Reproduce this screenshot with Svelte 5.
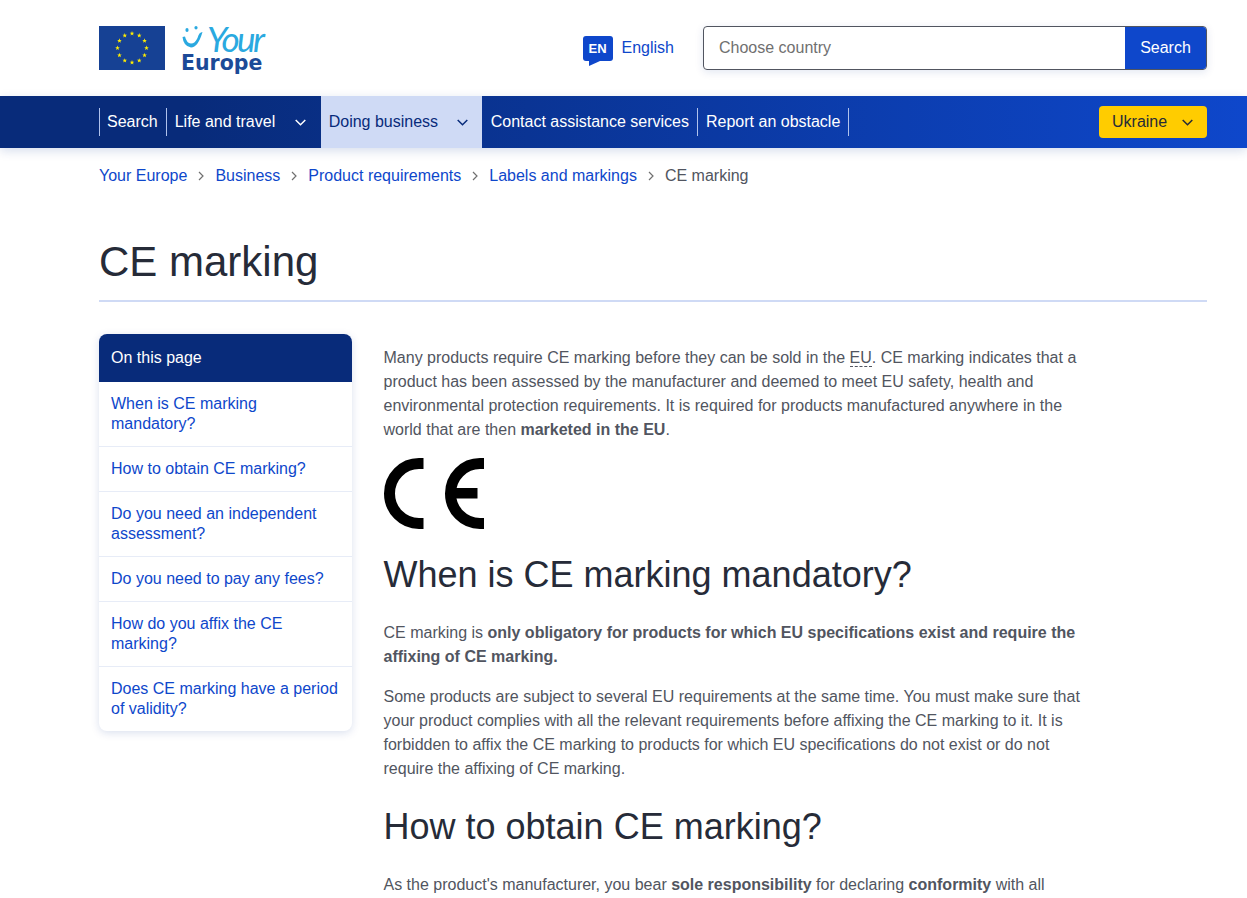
<script>
	const stars = Array.from({ length: 12 }, (_, i) => {
		const a = (i * Math.PI) / 6;
		return { x: 33 + 14.5 * Math.sin(a), y: 22 - 14.5 * Math.cos(a) };
	});

	const breadcrumbs = ['Your Europe', 'Business', 'Product requirements', 'Labels and markings'];

	const toc = [
		'When is CE marking mandatory?',
		'How to obtain CE marking?',
		'Do you need an independent assessment?',
		'Do you need to pay any fees?',
		'How do you affix the CE marking?',
		'Does CE marking have a period of validity?'
	];
</script>

<header class="site-header">
	<div class="container header-row">
		<a class="logo" href="#top">
			<svg class="flag" width="66" height="44" viewBox="0 0 66 44">
				<rect width="66" height="44" fill="#164194" />
				{#each stars as s}
					<polygon
						fill="#ffed00"
						transform="translate({s.x} {s.y})"
						points="0,-2.4 .6,-.8 2.3,-.8 1,.3 1.4,2 0,1 -1.4,2 -1,.3 -2.3,-.8 -.6,-.8"
					/>
				{/each}
			</svg>
			<span class="logo-mark">
				<svg class="smile" width="26" height="26" viewBox="0 0 26 26">
					<ellipse cx="6" cy="4" rx="1.600" ry="2" fill="#2aa9e0" />
					<ellipse cx="15" cy="1.800" rx="1.600" ry="1.800" fill="#2aa9e0" />
					<path d="M1.500 11 Q2.500 20.500 10 21.500 Q17 21.500 21.500 6 Q18 6 16.500 12 Q14 17.500 10 17.500 Q5.500 17 4 10.500 Z" fill="#2aa9e0" />
				</svg>
				<span class="logo-your">Your</span>
				<span class="logo-europe">Europe</span>
			</span>
		</a>
		<div class="header-right">
			<a class="lang" href="#top">
				<span class="lang-icon">EN</span>
				<span>English</span>
			</a>
			<div class="search">
				<span class="search-input">Choose country</span>
				<button class="search-btn">Search</button>
			</div>
		</div>
	</div>
</header>

<nav class="main-nav">
	<div class="container nav-row">
		<ul class="nav-list">
			<li class="nav-item sep"><a href="#top">Search</a></li>
			<li class="nav-item sep drop">
				<a href="#top">Life and travel</a>
				<svg class="chev" width="11" height="7" viewBox="0 0 11 7"><path d="M.7 1 L5.500 5.800 L10.300 1" /></svg>
			</li>
			<li class="nav-item active">
				<a href="#top">Doing business</a>
				<svg class="chev" width="11" height="7" viewBox="0 0 11 7"><path d="M.7 1 L5.500 5.800 L10.300 1" /></svg>
			</li>
			<li class="nav-item contact"><a href="#top">Contact assistance services</a></li>
			<li class="nav-item report"><a href="#top">Report an obstacle</a></li>
		</ul>
		<button class="country">
			Ukraine
			<svg class="chev" width="11" height="7" viewBox="0 0 11 7"><path d="M.7 1 L5.500 5.800 L10.300 1" /></svg>
		</button>
	</div>
</nav>

<div class="container">
	<ol class="breadcrumb">
		{#each breadcrumbs as crumb}
			<li>
				<a href="#top">{crumb}</a>
				<svg width="6" height="10" viewBox="0 0 6 10"><path d="M1 1 L5 5 L1 9" /></svg>
			</li>
		{/each}
		<li class="current">CE marking</li>
	</ol>

	<h1>CE marking</h1>

	<div class="page">
		<aside class="toc">
			<div class="toc-title">On this page</div>
			{#each toc as item}
				<a class="toc-link" href="#top">{item}</a>
			{/each}
		</aside>

		<main class="content">
			<p>
				Many products require CE marking before they can be sold in the <span class="abbr">EU</span>. CE marking
				indicates that a product has been assessed by the manufacturer and deemed to meet EU safety, health and
				environmental protection requirements. It is required for products manufactured anywhere in the world that
				are then <strong>marketed in the EU</strong>.
			</p>
			<svg class="ce" width="101" height="71" viewBox="0 0 101 71">
				<path d="M39.500 5.500 L35 5.500 A29.500 30 0 0 0 35 65.500 L39.500 65.500" />
				<path d="M100 5.500 L96 5.500 A29.500 30 0 0 0 96 65.500 L100 65.500" />
				<rect x="70" y="30" width="23.500" height="10.500" />
			</svg>
			<h2>When is CE marking mandatory?</h2>
			<p>
				CE marking is <strong>only obligatory for products for which EU specifications exist and require the affixing
				of CE marking.</strong>
			</p>
			<p>
				Some products are subject to several EU requirements at the same time. You must make sure that your product
				complies with all the relevant requirements before affixing the CE marking to it. It is forbidden to affix
				the CE marking to products for which EU specifications do not exist or do not require the affixing of CE
				marking.
			</p>
			<h2>How to obtain CE marking?</h2>
			<p>
				As the product's manufacturer, you bear <strong>sole responsibility</strong> for declaring
				<strong>conformity</strong> with all
			</p>
		</main>
	</div>
</div>

<style>
	:global(body) {
		font-family: "Liberation Sans", Arial, sans-serif;
		font-size: 16px;
		color: #515560;
		background: #fff;
		overflow: hidden;
	}

	a {
		color: #0e47cb;
		text-decoration: none;
	}

	.container {
		width: 1108px;
		margin-left: 99px;
	}

	.site-header {
		height: 96px;
	}

	.header-row {
		display: flex;
		align-items: center;
		justify-content: space-between;
		height: 96px;
	}

	.logo {
		display: flex;
		align-items: flex-start;
		gap: 16px;
		margin-top: 5px;
	}

	.flag {
		display: block;
	}

	.logo-mark {
		position: relative;
		display: block;
		width: 86px;
		height: 50px;
	}

	.smile {
		position: absolute;
		left: 0;
		top: 0;
	}

	.logo-your {
		position: absolute;
		left: 26px;
		top: -6px;
		font: italic 400 35px/36px Lato, sans-serif;
		letter-spacing: -2.500px;
		color: #2aa9e0;
	}

	.logo-europe {
		position: absolute;
		left: 0;
		top: 25px;
		font: 700 20.500px/24px "DejaVu Sans", sans-serif;
		color: #1c4a97;
	}

	.header-right {
		display: flex;
		align-items: center;
	}

	.lang {
		display: flex;
		align-items: center;
		gap: 9px;
		margin-right: 29px;
	}

	.lang-icon {
		position: relative;
		width: 30px;
		height: 25px;
		margin-top: 1px;
		background: #0e47cb;
		border-radius: 3px;
		color: #fff;
		font-size: 13px;
		font-weight: 700;
		line-height: 25px;
		text-align: center;
	}

	.lang-icon::after {
		content: "";
		position: absolute;
		left: 6px;
		bottom: -5px;
		border-top: 5px solid #0e47cb;
		border-right: 11px solid transparent;
	}

	.search {
		display: flex;
		box-sizing: border-box;
		width: 504px;
		height: 44px;
		border: 1px solid #515560;
		border-radius: 4px;
		overflow: hidden;
		box-shadow: 0 2px 8px rgba(9, 49, 142, 0.12);
	}

	.search-input {
		flex: 1;
		padding-left: 15px;
		line-height: 42px;
		color: #707070;
	}

	.search-btn {
		width: 81px;
		border: 0;
		background: #0e47cb;
		color: #fff;
		font: inherit;
	}

	.main-nav {
		position: relative;
		height: 52px;
		background: linear-gradient(90deg, #082b7a 15%, #0e47cb 100%);
		box-shadow: 0 3px 10px rgba(9, 49, 142, 0.16);
	}

	.nav-row {
		display: flex;
		align-items: center;
		justify-content: space-between;
		height: 52px;
	}

	.nav-list {
		display: flex;
		height: 52px;
		margin: 0;
		padding: 0;
		list-style: none;
	}

	.nav-item {
		display: flex;
		align-items: center;
		position: relative;
	}

	.nav-item a {
		color: #fff;
	}

	.nav-item.sep {
		padding: 0 8px;
	}

	.sep::before,
	.contact::after,
	.report::after {
		content: "";
		position: absolute;
		top: 12px;
		height: 28px;
		border-left: 1px solid #b0c2ec;
	}

	.sep::before {
		left: 0;
	}

	.contact::after,
	.report::after {
		right: 0;
	}

	.nav-item.drop {
		width: 155px;
		box-sizing: border-box;
		justify-content: space-between;
		padding: 0 15px 0 9px;
	}

	.chev {
		fill: none;
		stroke: currentColor;
		stroke-width: 1.500;
		color: #fff;
	}

	.active {
		width: 161px;
		box-sizing: border-box;
		padding: 0 14px 0 8px;
		justify-content: space-between;
		background: #cfdaf5;
	}

	.nav-item.active a,
	.active .chev {
		color: #082b7a;
	}

	.contact {
		padding: 0 9px;
	}

	.report {
		padding: 0 9px 0 8px;
		margin-right: 1px;
	}

	.country {
		display: flex;
		align-items: center;
		justify-content: space-between;
		box-sizing: border-box;
		width: 108px;
		height: 32px;
		padding: 0 14px 0 13px;
		border: 0;
		border-radius: 4px;
		background: #ffcc00;
		color: #262b38;
		font: inherit;
	}

	.country .chev {
		color: #262b38;
	}

	.breadcrumb {
		display: flex;
		margin: 0;
		padding: 19px 0 0;
		height: 35px;
		list-style: none;
		line-height: 18px;
	}

	.breadcrumb li {
		display: flex;
		align-items: center;
		gap: 11px;
		margin-right: 11px;
		height: 18px;
	}

	.breadcrumb svg {
		fill: none;
		stroke: #707070;
		stroke-width: 1.200;
	}

	h1 {
		margin: 35px 0 0;
		padding-bottom: 13px;
		border-bottom: 2px solid #cfdaf5;
		color: #262b38;
		font-size: 42px;
		font-weight: 400;
		line-height: 50px;
	}

	.page {
		display: flex;
		align-items: flex-start;
		gap: 31.500px;
		margin-top: 32px;
	}

	.toc {
		flex: none;
		width: 253px;
		border-radius: 8px;
		overflow: hidden;
		background: #fff;
		box-shadow: 0 2px 8px rgba(9, 49, 142, 0.15);
	}

	.toc-title {
		padding: 12px;
		background: #082b7a;
		color: #fff;
		line-height: 24px;
	}

	.toc-link {
		display: block;
		padding: 12px;
		line-height: 20px;
		border-top: 1px solid #e7ecf7;
	}

	.toc-title + .toc-link {
		border-top: 0;
	}

	.content {
		width: 700px;
		padding-top: 12px;
		line-height: 24px;
	}

	.content p {
		margin: 0 0 16px;
	}

	.abbr {
		border-bottom: 1px dashed #515560;
	}

	.ce {
		display: block;
		margin: 0;
		fill: none;
		stroke: #000;
		stroke-width: 11;
	}

	.ce rect {
		fill: #000;
		stroke: none;
	}

	h2 {
		margin: 24px 0 24px;
		color: #262b38;
		font-size: 36px;
		font-weight: 400;
		line-height: 44px;
	}
</style>
